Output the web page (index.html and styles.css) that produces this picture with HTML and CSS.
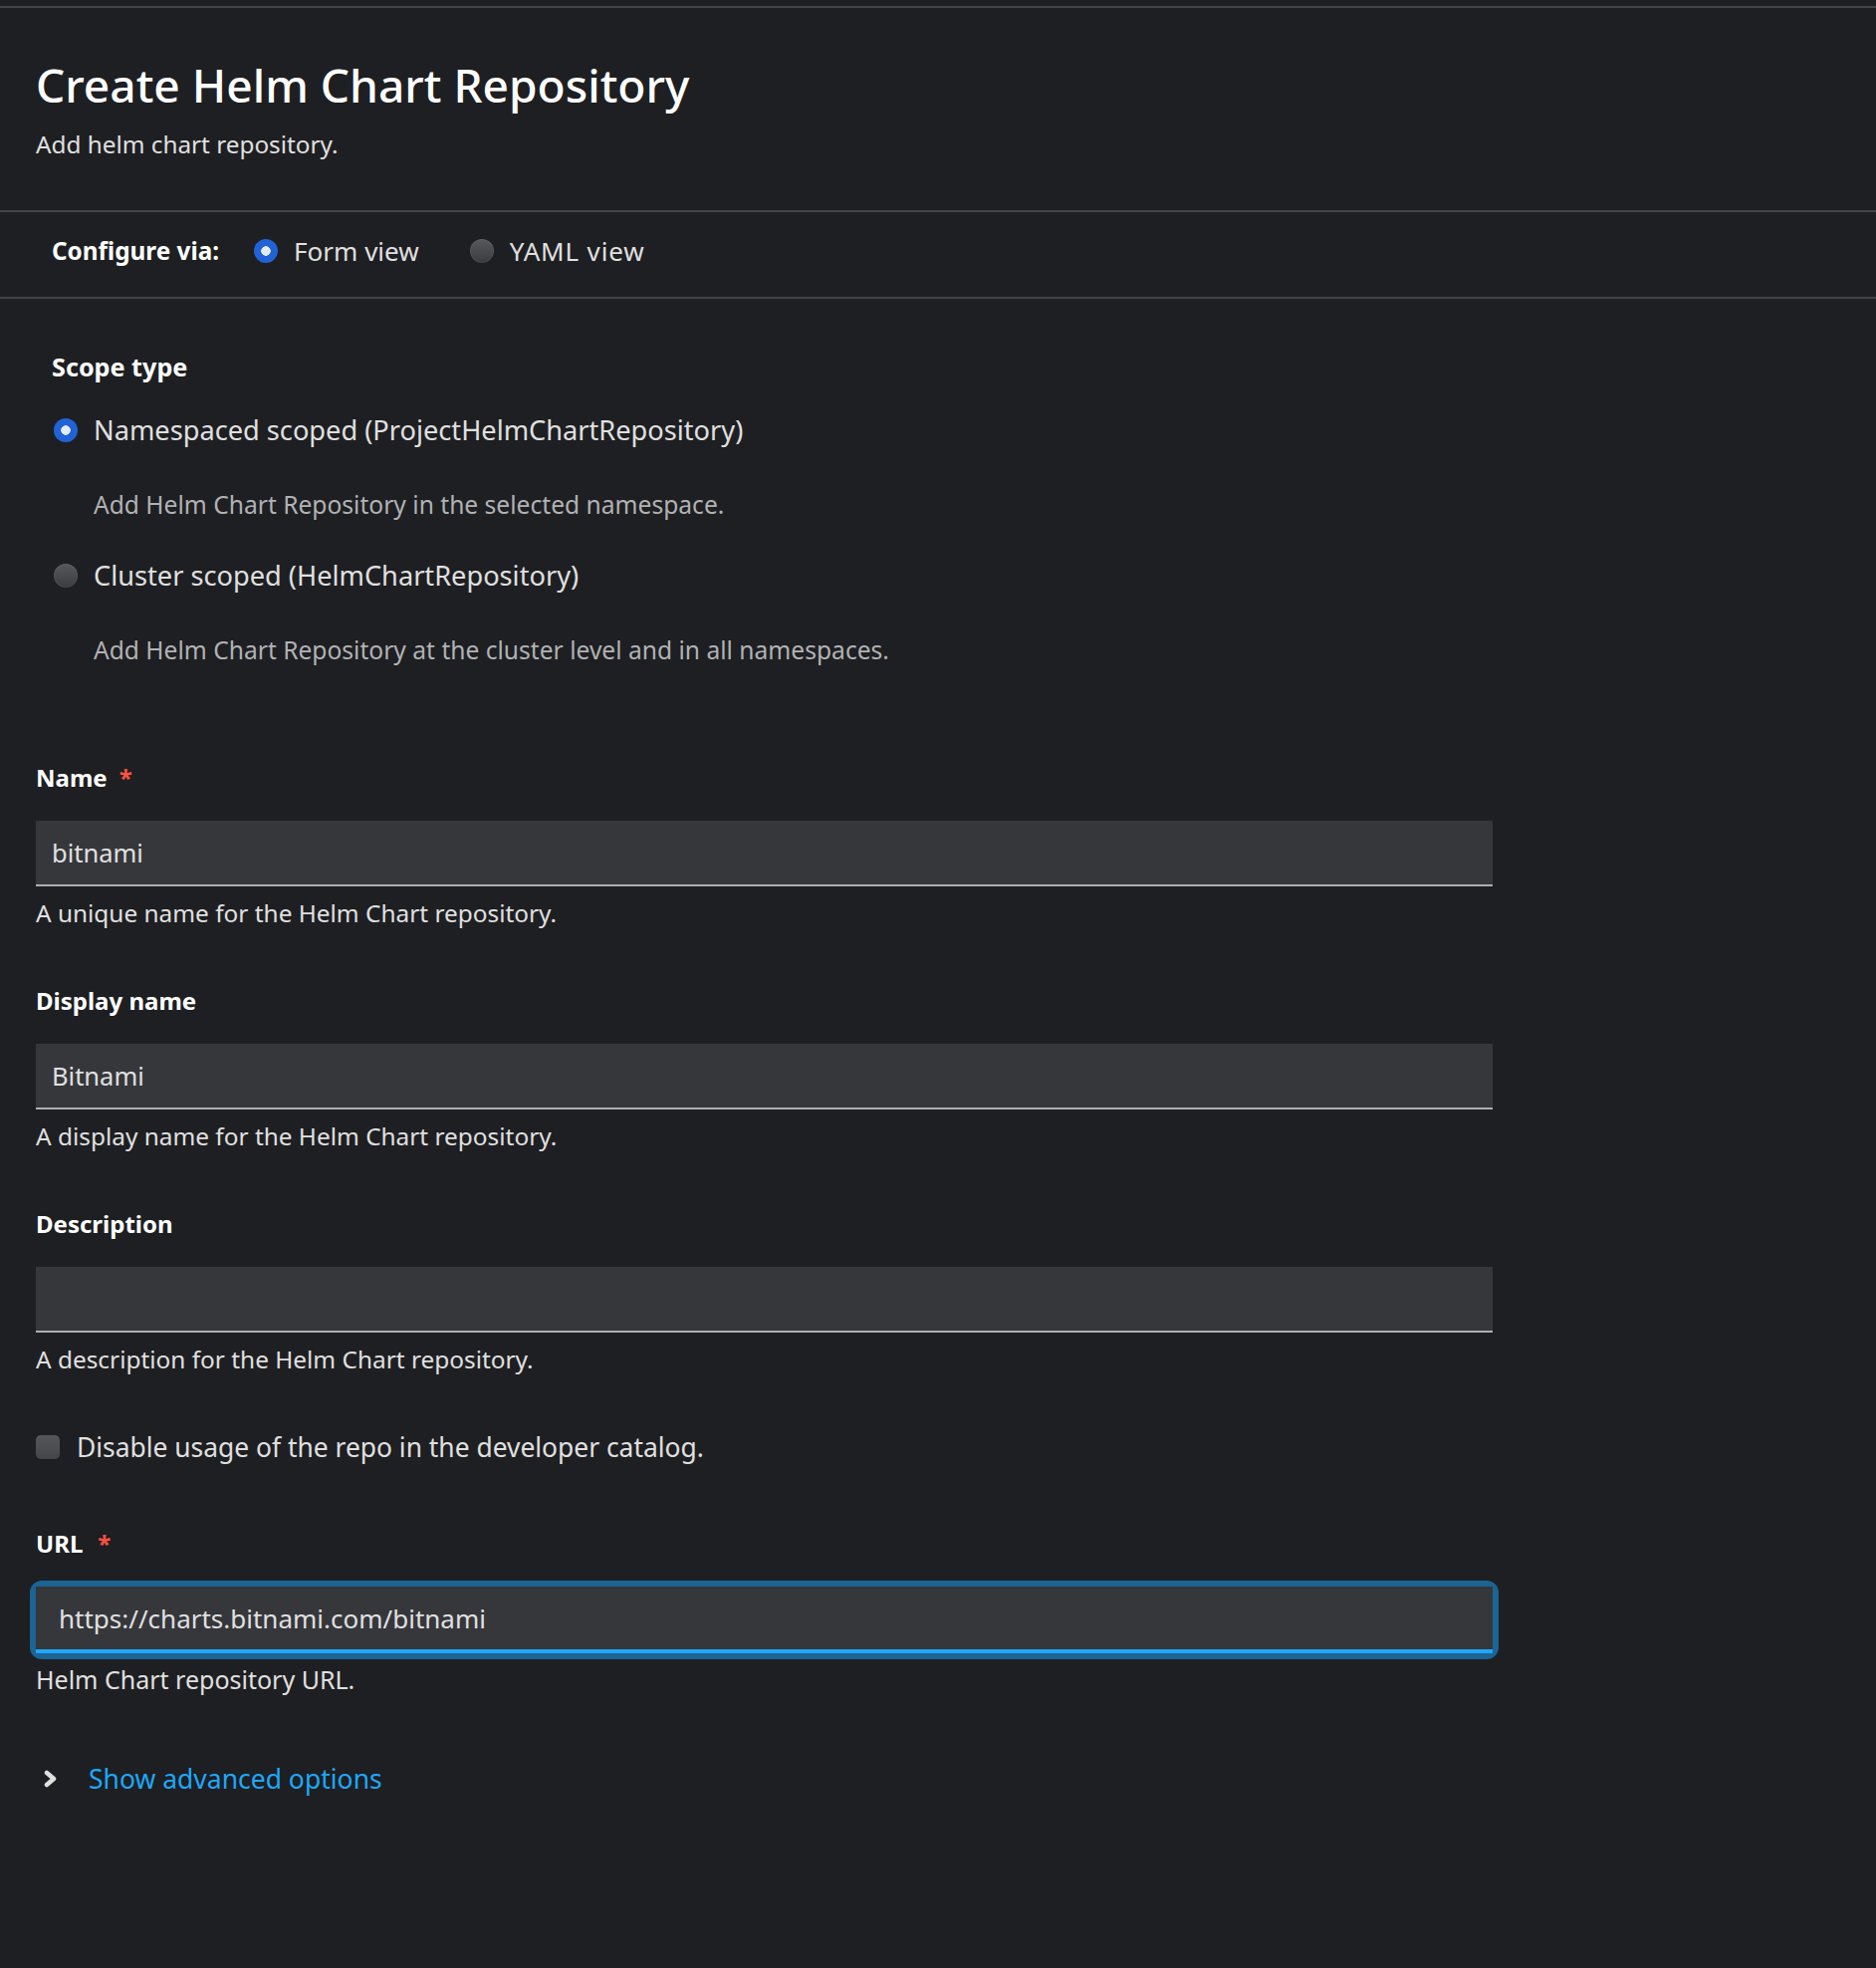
FILE: index.html
```html
<!DOCTYPE html>
<html lang="en">
<head>
<meta charset="utf-8">
<title>Create Helm Chart Repository</title>
<link rel="stylesheet" href="styles.css">
</head>
<body>
<div class="topline"></div>
<header class="page-head">
  <h1 class="title">Create Helm Chart Repository</h1>
  <p class="subtitle">Add helm chart repository.</p>
</header>
<div class="config-bar">
  <span class="config-label">Configure via:</span>
  <label class="radio-opt"><span class="radio radio-on"></span><span class="radio-text">Form view</span></label>
  <label class="radio-opt"><span class="radio"></span><span class="radio-text radio-text-wide">YAML view</span></label>
</div>
<main class="form">
  <section class="scope">
    <div class="scope-title">Scope type</div>
    <div class="scope-opt">
      <div class="scope-row"><span class="radio radio-on"></span><span class="scope-label">Namespaced scoped (ProjectHelmChartRepository)</span></div>
      <div class="scope-desc">Add Helm Chart Repository in the selected namespace.</div>
    </div>
    <div class="scope-opt">
      <div class="scope-row"><span class="radio"></span><span class="scope-label">Cluster scoped (HelmChartRepository)</span></div>
      <div class="scope-desc">Add Helm Chart Repository at the cluster level and in all namespaces.</div>
    </div>
  </section>

  <div class="field field-first">
    <label class="field-label">Name<span class="req">*</span></label>
    <input class="input" type="text" value="bitnami" readonly>
    <div class="helper">A unique name for the Helm Chart repository.</div>
  </div>

  <div class="field">
    <label class="field-label">Display name</label>
    <input class="input" type="text" value="Bitnami" readonly>
    <div class="helper">A display name for the Helm Chart repository.</div>
  </div>

  <div class="field">
    <label class="field-label">Description</label>
    <input class="input" type="text" value="" readonly>
    <div class="helper">A description for the Helm Chart repository.</div>
  </div>

  <label class="check-row"><span class="checkbox"></span><span class="check-text">Disable usage of the repo in the developer catalog.</span></label>

  <div class="field field-url">
    <label class="field-label">URL<span class="req req-url">*</span></label>
    <div class="focus-ring"><input class="input input-focus" type="text" value="https://charts.bitnami.com/bitnami" readonly></div>
    <div class="helper helper-wide">Helm Chart repository URL.</div>
  </div>

  <div class="advanced">
    <svg class="chev" width="14" height="18" viewBox="0 0 14 18" aria-hidden="true"><polyline points="3,3 10,9 3,15" fill="none" stroke="#e0e0e0" stroke-width="4.5" stroke-linecap="round" stroke-linejoin="round"/></svg>
    <span class="adv-link">Show advanced options</span>
  </div>
</main>
</body>
</html>
```
FILE: styles.css
```css
html, body {
  margin: 0;
  padding: 0;
  background: #1e1f22;
}
body {
  font-family: "Noto Sans", "Open Sans", sans-serif;
  color: #e0e0e0;
  min-height: 1976px;
}
.topline {
  height: 2px;
  margin-top: 6px;
  background: #434448;
}
.page-head {
  padding: 0 36px;
}
.title {
  margin: 50px 0 0;
  font-size: 46.1px;
  line-height: 56px;
  font-weight: 500;
  color: #ffffff;
}
.subtitle {
  margin: 13px 0 0;
  font-size: 24.3px;
  line-height: 36px;
  color: #e0e0e0;
}
.config-bar {
  margin-top: 48px;
  border-top: 2px solid #434448;
  border-bottom: 2px solid #434448;
  padding: 21px 52px 28px;
  display: flex;
  align-items: center;
  height: 36px;
}
.config-label {
  font-weight: 700;
  font-size: 24.3px;
  line-height: 36px;
  color: #ffffff;
  margin-right: 35px;
}
.radio-opt {
  display: flex;
  align-items: center;
  gap: 16px;
  margin-right: 51px;
}
.radio-text {
  font-size: 26px;
  line-height: 36px;
  color: #e0e0e0;
}
.radio-text-wide {
  letter-spacing: 0.85px;
}
.radio {
  width: 24px;
  height: 24px;
  border-radius: 50%;
  flex: none;
  background: linear-gradient(180deg, #57585c 0%, #3b3c40 100%);
  box-shadow: inset 0 0 0 1px rgba(255,255,255,0.06);
}
.radio-on {
  background: radial-gradient(circle, #e3eaf8 0 4.5px, #2163d6 5px);
  box-shadow: none;
}
.form {
  margin: 0 36px;
  width: 1463px;
}
.scope {
  padding: 50px 16px 0;
}
.scope-title {
  font-weight: 700;
  font-size: 25.2px;
  line-height: 36px;
  color: #ffffff;
  margin-bottom: 28px;
}
.scope-opt + .scope-opt {
  margin-top: 35px;
}
.scope-row {
  display: flex;
  align-items: center;
  gap: 16px;
  padding-left: 2px;
}
.scope-label {
  font-size: 27.2px;
  line-height: 36px;
  color: #e0e0e0;
}
.scope-desc {
  margin-top: 39px;
  padding-left: 42px;
  font-size: 24.6px;
  line-height: 36px;
  color: #b1b2b4;
}
.field {
  margin-top: 52px;
  display: flex;
  flex-direction: column;
}
.field-first {
  margin-top: 92px;
}
.field-label {
  font-weight: 700;
  font-size: 24px;
  line-height: 36px;
  color: #ffffff;
  margin-bottom: 25px;
}
.req {
  color: #fe5142;
  margin-left: 12px;
  font-weight: 700;
}
.req-url {
  margin-left: 15px;
}
.input {
  display: block;
  box-sizing: border-box;
  width: 100%;
  height: 66px;
  margin: 0;
  padding: 0 16px;
  border: 0;
  border-bottom: 2px solid #acaeb1;
  border-radius: 0;
  background: #36373b;
  font-family: "Noto Sans", "Open Sans", sans-serif;
  font-size: 25.5px;
  color: #e0e0e0;
  outline: none;
  -webkit-appearance: none;
  appearance: none;
}
.focus-ring {
  border-radius: 6px;
  box-shadow: 0 0 0 6px #1b6494;
}
.input-focus {
  height: 67px;
  padding-left: 23px;
  border-bottom: 4px solid #1fa7f8;
  font-size: 26px;
}
.helper {
  margin-top: 9px;
  font-size: 24.4px;
  line-height: 36px;
  color: #e0e0e0;
}
.helper-wide {
  font-size: 25px;
}
.field-url {
  margin-top: 61px;
}
.field-url .helper {
  margin-top: 8px;
}
.check-row {
  margin-top: 52px;
  display: flex;
  align-items: center;
  gap: 17px;
}
.checkbox {
  width: 24px;
  height: 24px;
  border-radius: 5px;
  flex: none;
  background: linear-gradient(180deg, #55565a 0%, #45464a 100%);
}
.check-text {
  font-size: 26.4px;
  line-height: 36px;
  color: #e0e0e0;
}
.advanced {
  margin-top: 64px;
  display: flex;
  align-items: center;
  gap: 31px;
  padding-left: 8px;
}
.chev {
  display: block;
  flex: none;
}
.adv-link {
  font-size: 26.5px;
  line-height: 36px;
  color: #1fa7f8;
}
```
